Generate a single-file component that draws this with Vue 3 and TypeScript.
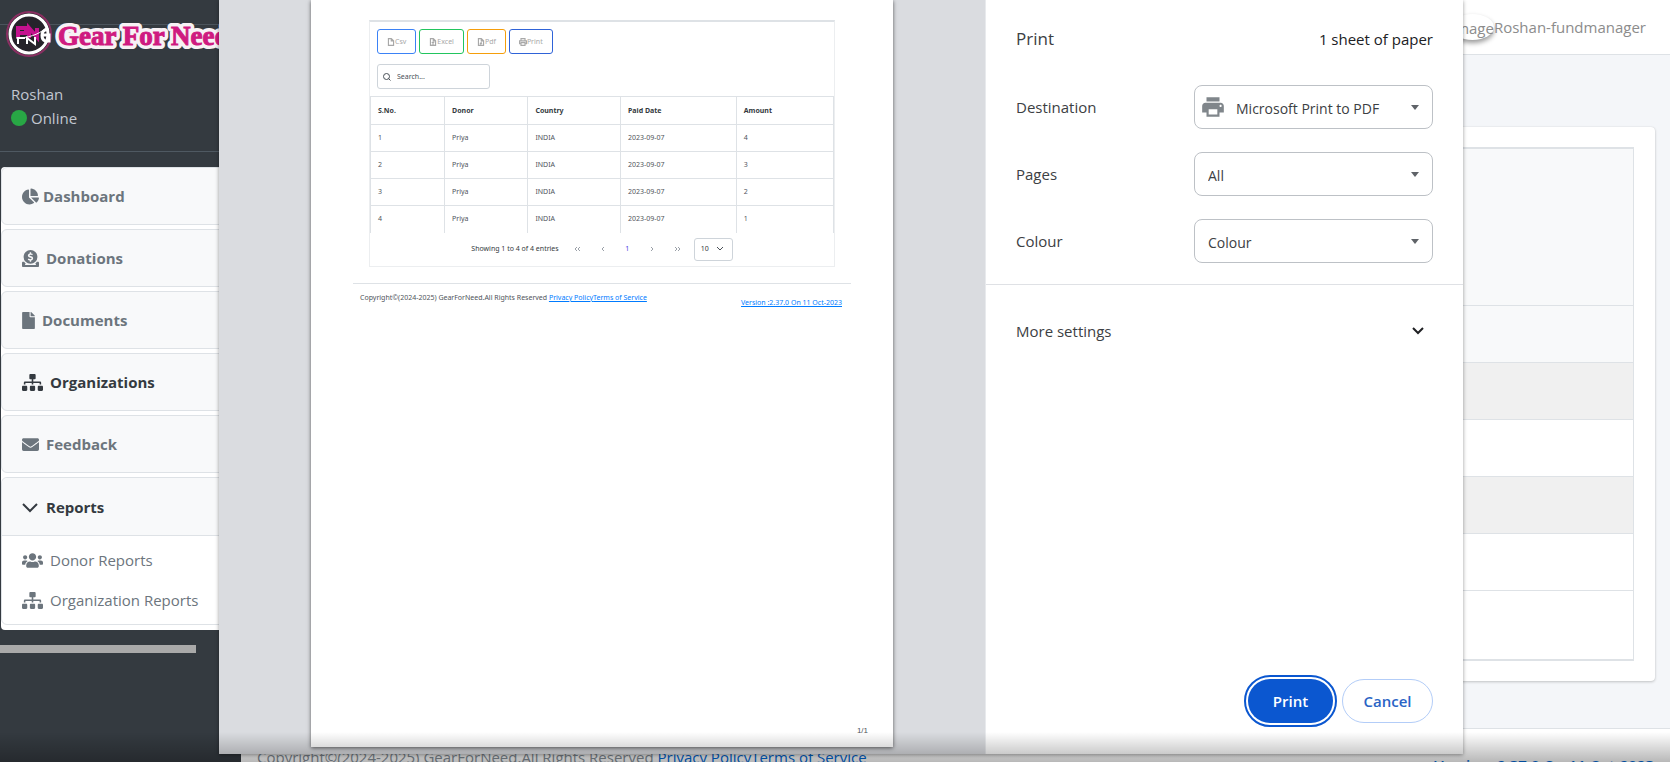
<script setup lang="ts">
import { ref } from 'vue'

interface NavItem {
  label: string
  icon: string
  viewBox: string
  width: number
  active?: boolean
}

interface Donation {
  id: number
  donor: string
  country: string
  paid: string
  amount: number
}

const sitemap =
  'M128 352H32c-17.67 0-32 14.33-32 32v96c0 17.67 14.33 32 32 32h96c17.67 0 32-14.33 32-32v-96c0-17.67-14.33-32-32-32zm-24-80h192v48h48v-48h192v48h48v-57.59c0-21.17-17.23-38.41-38.41-38.41H344v-64h40c17.67 0 32-14.33 32-32V32c0-17.67-14.33-32-32-32H256c-17.67 0-32 14.33-32 32v96c0 17.67 14.33 32 32 32h40v64H94.41C73.23 224 56 241.23 56 262.41V320h48v-48zm264 80h-96c-17.67 0-32 14.33-32 32v96c0 17.67 14.33 32 32 32h96c17.67 0 32-14.33 32-32v-96c0-17.67-14.33-32-32-32zm240 0h-96c-17.67 0-32 14.33-32 32v96c0 17.67 14.33 32 32 32h96c17.67 0 32-14.33 32-32v-96c0-17.67-14.33-32-32-32z'

const navItems: NavItem[] = [
  {
    label: 'Dashboard',
    width: 17,
    viewBox: '0 0 544 512',
    icon: 'M527.79 288H290.5l158.03 158.03c6.04 6.04 15.98 6.53 22.19.68 38.7-36.46 65.32-85.61 73.13-140.86 1.34-9.46-6.51-17.85-16.06-17.85zm-15.83-64.8C503.72 103.74 408.26 8.28 288.8.04 279.68-.59 272 7.1 272 16.24V240h223.77c9.14 0 16.82-7.68 16.19-16.8zM224 288V50.71c0-9.55-8.39-17.4-17.84-16.06C86.99 51.49-4.1 155.6.14 280.37 4.5 408.51 114.83 513.59 243.03 511.98c50.4-.63 96.97-16.87 135.26-44.03 7.9-5.6 8.42-17.23 1.57-24.08L224 288z',
  },
  {
    label: 'Donations',
    width: 17,
    viewBox: '0 0 512 512',
    icon: 'M256 416a208 208 0 1 0 0-416a208 208 0 0 0 0 416zM233 70h42v32c22 2 38 8 54 20l-26 34c-22-15-76-22-80 4c-2 34 112 16 112 90c0 38-26 62-60 68v34h-42v-33c-24-3-44-11-60-24l26-36c26 20 84 30 90 0c4-40-112-18-112-92c0-36 26-58 56-64zM480 352h-34a256 256 0 0 1-58 64h24c8 0 12 8 12 16s-6 16-14 16H102c-8 0-14-8-14-16s6-16 14-16h22a256 256 0 0 1-58-64H32c-18 0-32 14-32 32v96c0 18 14 32 32 32h448c18 0 32-14 32-32v-96c0-18-14-32-32-32z',
  },
  {
    label: 'Documents',
    width: 13,
    viewBox: '0 0 384 512',
    icon: 'M224 136V0H24C10.7 0 0 10.7 0 24v464c0 13.3 10.7 24 24 24h336c13.3 0 24-10.7 24-24V160H248c-13.2 0-24-10.8-24-24zm160-14.1v6.1H256V0h6.1c6.4 0 12.5 2.5 17 7l97.9 98c4.5 4.5 7 10.6 7 16.9z',
  },
  { label: 'Organizations', width: 21, viewBox: '0 0 640 512', active: true, icon: sitemap },
  {
    label: 'Feedback',
    width: 17,
    viewBox: '0 0 512 512',
    icon: 'M502.3 190.8c3.9-3.1 9.7-.2 9.7 4.7V400c0 26.5-21.5 48-48 48H48c-26.5 0-48-21.5-48-48V195.6c0-5 5.7-7.8 9.7-4.7 22.4 17.4 52.1 39.5 154.1 113.6 21.1 15.4 56.7 47.8 92.2 47.6 35.7.3 72-32.8 92.3-47.6 102-74.1 131.6-96.3 154-113.7zM256 320c23.2.4 56.6-29.2 73.4-41.4 132.7-96.3 142.8-104.7 173.4-128.7 5.8-4.5 9.2-11.5 9.2-18.9v-19c0-26.5-21.5-48-48-48H48c-26.5 0-48 21.5-48 48v19c0 7.4 3.4 14.3 9.2 18.9 30.6 23.9 40.7 32.4 173.4 128.7 16.8 12.2 50.2 41.8 73.4 41.4z',
  },
]

const reportLinks: NavItem[] = [
  {
    label: 'Donor Reports',
    width: 21,
    viewBox: '0 0 640 512',
    icon: 'M96 224c35.3 0 64-28.7 64-64s-28.7-64-64-64-64 28.7-64 64 28.7 64 64 64zm448 0c35.3 0 64-28.7 64-64s-28.7-64-64-64-64 28.7-64 64 28.7 64 64 64zm32 32h-64c-17.6 0-33.5 7.1-45.1 18.6 40.3 22.1 68.9 62 75.1 109.4h66c17.7 0 32-14.3 32-32v-32c0-35.3-28.7-64-64-64zm-256 0c61.9 0 112-50.1 112-112S381.9 32 320 32 208 82.1 208 144s50.1 112 112 112zm76.8 32h-8.3c-20.8 10-43.9 16-68.5 16s-47.6-6-68.5-16h-8.3C179.6 288 128 339.6 128 403.2V432c0 26.5 21.5 48 48 48h288c26.5 0 48-21.5 48-48v-28.8c0-63.6-51.6-115.2-115.2-115.2zm-223.7-13.4C161.5 263.1 145.6 256 128 256H64c-35.3 0-64 28.7-64 64v32c0 17.7 14.3 32 32 32h65.9c6.3-47.4 34.9-87.3 75.2-109.4z',
  },
  { label: 'Organization Reports', width: 21, viewBox: '0 0 640 512', icon: sitemap },
]

const filePath = 'M2.5 1h5l4 4v8h-9zM7.5 1v4h4'
const exportButtons = [
  { label: 'Csv', kind: 'csv', path: filePath },
  { label: 'Excel', kind: 'excel', path: filePath + 'M5 7l4 4M9 7l-4 4' },
  { label: 'Pdf', kind: 'pdf', path: filePath + 'M5 11c2-1 3-3 2-4M5 9l4 1' },
  { label: 'Print', kind: 'print', path: 'M3.5 5V1h7v4M3.5 10H1V5h12v5h-2.5M3.5 8h7v5h-7z' },
]

const columns = ['S.No.', 'Donor', 'Country', 'Paid Date', 'Amount']
const donations: Donation[] = [4, 3, 2, 1].map((amount, i) => ({
  id: i + 1,
  donor: 'Priya',
  country: 'INDIA',
  paid: '2023-09-07',
  amount,
}))

const destination = ref('Microsoft Print to PDF')
const pages = ref('All')
const colour = ref('Colour')
const search = ref('')
const pageSize = ref('10')
</script>

<template>
  <div class="screen">
    <aside class="sidebar">
      <a class="brand" href="#" aria-label="Gear For Need">
        <svg class="brand-art" width="241" height="68" viewBox="0 0 241 68">
          <circle cx="29" cy="34" r="22" fill="#222" stroke="#8a2f62" stroke-width="2" />
          <circle cx="29" cy="34" r="19" fill="#26232a" stroke="#fff" stroke-width="3" />
          <path d="M18 38V28h8v5h-8M29 38V28l8 9v-9" fill="none" stroke="#c4128e" stroke-width="4" />
          <path d="M18 44v-6h7M27 44v-6l8 6v-7" fill="none" stroke="#fff" stroke-width="2" />
          <path d="M49 30h-4c-4 2-4 9 0 11h4v-6h-6" fill="none" stroke="#fff" stroke-width="3" />
          <path d="M16 38c12 0 22-3 30-10" fill="none" stroke="#fff" stroke-width="1" />
          <text class="brand-glow" x="58" y="45">Gear For Need</text>
          <text class="brand-text" x="58" y="45">Gear For Need</text>
        </svg>
      </a>
      <div class="user">
        <div>Roshan</div>
        <div class="status"><span class="dot"></span>Online</div>
      </div>
      <nav class="menu">
        <a
          v-for="item in navItems"
          :key="item.label"
          href="#"
          class="menu-item"
          :class="{ active: item.active, tight: item.label === 'Dashboard' }"
        >
          <svg :width="item.width" height="17" :viewBox="item.viewBox" fill="currentColor" fill-rule="evenodd">
            <path :d="item.icon" />
          </svg>
          <span>{{ item.label }}</span>
        </a>
        <div class="menu-group">
          <button type="button" class="menu-item active group-head">
            <svg width="16" height="16" viewBox="0 0 16 16" fill="none" stroke="currentColor" stroke-width="2">
              <path d="M1 5l7 7 7-7" />
            </svg>
            <span>Reports</span>
          </button>
          <div class="group-body">
            <a v-for="link in reportLinks" :key="link.label" href="#" class="sub-item">
              <svg :width="link.width" height="17" :viewBox="link.viewBox" fill="currentColor">
                <path :d="link.icon" />
              </svg>
              <span>{{ link.label }}</span>
            </a>
          </div>
        </div>
      </nav>
      <div class="scroll-thumb"></div>
    </aside>

    <div class="main">
      <header class="topbar">
        <span class="avatar">Image</span>
        <span>Roshan-fundmanager</span>
      </header>
      <main class="content">
        <section class="card">
          <div class="grid">
            <div class="grid-tools"></div>
            <div class="grid-head"></div>
            <div v-for="row in donations" :key="row.id" class="grid-row"></div>
            <div class="grid-pager"></div>
          </div>
        </section>
      </main>
      <footer class="footer">
        <span>Copyright©(2024-2025) GearForNeed.All Rights Reserved <a href="#">Privacy Policy</a><a href="#">Terms of Service</a></span>
        <a class="version" href="#">Version :2.37.0 On 11 Oct-2023</a>
      </footer>
    </div>

    <div class="dialog" role="dialog" aria-label="Print">
      <div class="preview">
        <div class="paper">
          <div class="sheet-card">
            <div class="exports">
              <button v-for="b in exportButtons" :key="b.label" type="button" :class="b.kind">
                <svg width="8" height="8" viewBox="0 0 14 14" fill="none" stroke="currentColor" stroke-width="2">
                  <path :d="b.path" />
                </svg>
                {{ b.label }}
              </button>
            </div>
            <label class="search">
              <svg width="8" height="8" viewBox="0 0 16 16" fill="none" stroke="currentColor" stroke-width="2">
                <circle cx="7" cy="7" r="6" />
                <path d="M11 11l4 4" />
              </svg>
              <input v-model="search" type="text" placeholder="Search..." aria-label="Search" />
            </label>
            <table>
              <colgroup>
                <col class="c1" />
                <col class="c2" />
                <col class="c3" />
                <col class="c4" />
                <col />
              </colgroup>
              <thead>
                <tr>
                  <th v-for="c in columns" :key="c" scope="col">{{ c }}</th>
                </tr>
              </thead>
              <tbody>
                <tr v-for="row in donations" :key="row.id">
                  <td>{{ row.id }}</td>
                  <td>{{ row.donor }}</td>
                  <td>{{ row.country }}</td>
                  <td>{{ row.paid }}</td>
                  <td>{{ row.amount }}</td>
                </tr>
              </tbody>
            </table>
            <div class="pager">
              <span>Showing 1 to 4 of 4 entries</span>
              <button type="button" aria-label="First page">
                <svg width="7" height="6" viewBox="0 0 7 6"><path d="M3 1L1 3l2 2M6 1L4 3l2 2" /></svg>
              </button>
              <button type="button" aria-label="Previous page">
                <svg width="7" height="6" viewBox="0 0 7 6"><path d="M5 1L3 3l2 2" /></svg>
              </button>
              <button type="button" class="current">1</button>
              <button type="button" aria-label="Next page">
                <svg width="7" height="6" viewBox="0 0 7 6"><path d="M2 1l2 2-2 2" /></svg>
              </button>
              <button type="button" aria-label="Last page">
                <svg width="7" height="6" viewBox="0 0 7 6"><path d="M1 1l2 2-2 2M4 1l2 2-2 2" /></svg>
              </button>
              <span class="page-size">
                <select v-model="pageSize" aria-label="Rows per page">
                  <option>10</option>
                </select>
                <svg class="caret" width="8" height="6" viewBox="0 0 8 6"><path d="M1 1l3 3 3-3" /></svg>
              </span>
            </div>
          </div>
          <div class="sheet-footer">
            <span>Copyright©(2024-2025) GearForNeed.All Rights Reserved <a href="#">Privacy Policy</a><a href="#">Terms of Service</a></span>
            <a class="version" href="#">Version :2.37.0 On 11 Oct-2023</a>
          </div>
          <div class="page-no">1/1</div>
        </div>
      </div>

      <form class="settings" @submit.prevent>
        <div class="title-row">
          <h1>Print</h1>
          <span class="sheets">1 sheet of paper</span>
        </div>
        <div class="fields">
          <div class="field">
            <label for="destination">Destination</label>
            <span class="select with-icon">
              <svg class="printer" width="26" height="26" viewBox="0 0 24 24" fill="#80868b">
                <path d="M19 8H5c-1.66 0-3 1.34-3 3v6h4v4h12v-4h4v-6c0-1.66-1.34-3-3-3zm-3 11H8v-5h8v5zm3-7c-.55 0-1-.45-1-1s.45-1 1-1 1 .45 1 1-.45 1-1 1zm-1-9H6v4h12V3z" />
              </svg>
              <select id="destination" v-model="destination">
                <option>Microsoft Print to PDF</option>
              </select>
              <svg class="arrow" width="8" height="5" viewBox="0 0 8 5" fill="#5f6368"><path d="M0 0h8L4 5z" /></svg>
            </span>
          </div>
          <div class="field">
            <label for="pages">Pages</label>
            <span class="select">
              <select id="pages" v-model="pages">
                <option>All</option>
              </select>
              <svg class="arrow" width="8" height="5" viewBox="0 0 8 5" fill="#5f6368"><path d="M0 0h8L4 5z" /></svg>
            </span>
          </div>
          <div class="field">
            <label for="colour">Colour</label>
            <span class="select">
              <select id="colour" v-model="colour">
                <option>Colour</option>
              </select>
              <svg class="arrow" width="8" height="5" viewBox="0 0 8 5" fill="#5f6368"><path d="M0 0h8L4 5z" /></svg>
            </span>
          </div>
        </div>
        <button type="button" class="more">
          <span>More settings</span>
          <svg width="14" height="10" viewBox="0 0 14 10" fill="none" stroke="#202124" stroke-width="2">
            <path d="M2 2l5 5 5-5" />
          </svg>
        </button>
        <div class="actions">
          <button type="submit" class="primary">Print</button>
          <button type="button" class="secondary">Cancel</button>
        </div>
      </form>
    </div>

    <div class="shade"></div>
  </div>
</template>

<style>
body {
  margin: 0;
  overflow: hidden;
}
</style>

<style scoped>
* {
  box-sizing: border-box;
}
.screen {
  position: relative;
  display: flex;
  height: 100vh;
  overflow: hidden;
  font-family: 'Open Sans', 'Noto Sans', sans-serif;
  font-size: 15px;
  line-height: 24px;
  background: #f4f6f9;
}
button,
input,
select {
  font: inherit;
  color: inherit;
  background: none;
  border: 0;
  margin: 0;
  padding: 0;
}
svg {
  flex: none;
}

.sidebar {
  flex: none;
  width: 241px;
  background: #343a40;
  color: #c2c7d0;
  overflow: hidden;
}
.brand {
  display: block;
  height: 66px;
  background: linear-gradient(#4b545c, #4b545c) 0 24px / 100% 1px no-repeat;
}
.brand-art {
  display: block;
}
.brand-glow,
.brand-text {
  font-family: 'Liberation Serif', serif;
  font-weight: 700;
  font-size: 27px;
}
.brand-glow {
  fill: #fff;
  stroke: #f7f2f5;
  stroke-width: 8px;
  stroke-linejoin: round;
}
.brand-text {
  fill: #cf1a80;
  stroke: #cf1a80;
  stroke-width: 1px;
}
.user {
  padding: 16px 11px 21px;
  border-bottom: 1px solid #4f5962;
}
.status {
  display: flex;
  align-items: center;
  gap: 4px;
}
.dot {
  width: 16px;
  height: 16px;
  border-radius: 50%;
  background: #28a745;
}
.menu {
  display: flex;
  flex-direction: column;
  gap: 4px;
  margin: 15px 0 0 1px;
  padding-bottom: 5px;
  background: #fff;
  border-radius: 4px 0 0 4px;
}
.menu-item {
  display: flex;
  align-items: center;
  gap: 7px;
  height: 58px;
  padding: 0 20px;
  border: 1px solid #dee2e6;
  border-radius: 6px;
  background: #f8f9fa;
  color: #6c757d;
  font-weight: 700;
  text-decoration: none;
}
.menu-item.tight {
  gap: 4px;
}
.menu-item.active {
  color: #343a40;
}
.menu-group {
  border: 1px solid #dee2e6;
  border-radius: 6px;
}
.menu-item.group-head {
  width: 100%;
  gap: 8px;
  border-width: 0 0 1px;
  border-radius: 6px 6px 0 0;
}
.group-body {
  display: flex;
  flex-direction: column;
  gap: 16px;
  padding: 12px 20px;
}
.sub-item {
  display: flex;
  align-items: center;
  gap: 7px;
  color: #6c757d;
  text-decoration: none;
  white-space: nowrap;
}
.scroll-thumb {
  width: 196px;
  height: 8px;
  margin-top: 15px;
  background: #a9a9a9;
}

.main {
  flex: 1;
  min-width: 0;
  display: flex;
  flex-direction: column;
}
.topbar {
  display: flex;
  align-items: center;
  justify-content: flex-end;
  height: 55px;
  padding-right: 24px;
  background: #fff;
  border-bottom: 1px solid #dee2e6;
  color: #8c8c8c;
}
.avatar {
  padding-top: 2px;
  border-radius: 50%;
  box-shadow: 0 3px 5px #00000066;
}
.content {
  flex: 1;
  padding: 72px 15px 47px;
}
.card {
  height: 554px;
  padding: 20px 21px;
  border-radius: 4px;
  background: #fff;
  box-shadow: 0 0 1px #00000020, 0 1px 3px #00000033;
}
.grid {
  border-right: 1px solid #dee2e6;
  border-top: 2px solid #dee2e6;
}
.grid > div {
  height: 57px;
  border-bottom: 1px solid #dee2e6;
}
.grid > .grid-tools {
  height: 157px;
  background: #f8f9fa;
}
.grid > .grid-head {
  background: #f8f9fa;
}
.grid-row:nth-child(odd) {
  background: #f0f0f0;
}
.grid > .grid-pager {
  height: 70px;
  border-bottom-width: 2px;
}
.footer {
  flex: none;
  display: flex;
  justify-content: space-between;
  height: 52px;
  margin-bottom: -18px;
  padding: 16px;
  border-top: 1px solid #dee2e6;
  background: #fff;
  color: #869099;
}
.footer a {
  color: #0069d9;
}
.footer .version {
  padding-top: 8px;
  font-weight: 600;
}

.dialog {
  position: absolute;
  inset: 0 207px 8px 219px;
  display: flex;
  background: #fff;
  box-shadow: 0 1px 4px #00000066;
}
.preview {
  flex: 1;
  min-width: 0;
  display: flex;
  background: #dadce0;
}
.paper {
  flex: 1;
  min-width: 0;
  display: flex;
  flex-direction: column;
  margin: 0 92px 7px;
  padding: 20px 42px 7px;
  background: #fff;
  box-shadow: 0 1px 4px #00000099;
  color: #4f545b;
  font-family: 'Noto Sans', 'Open Sans', sans-serif;
  font-size: 7px;
  line-height: 10px;
}
.sheet-card {
  margin: 0 16px;
  border: 1px solid #eceef0;
  border-top: 2px solid #dee2e6;
}
.exports {
  display: flex;
  gap: 3px;
  padding: 7px 7px 0;
}
.exports button {
  display: flex;
  align-items: center;
  justify-content: center;
  height: 25px;
  padding: 0 9px;
  border: 1px solid;
  border-radius: 3px;
  color: #a8a8a8;
}
.exports .csv {
  border-color: #3b82f6;
}
.exports .excel {
  border-color: #22c55e;
}
.exports .pdf {
  border-color: #f59e0b;
}
.exports .print {
  border-color: #2f63d8;
}
.search {
  display: flex;
  align-items: center;
  gap: 6px;
  width: 113px;
  height: 25px;
  margin: 10px 7px 7px;
  padding: 0 5px;
  border: 1px solid #ced4da;
  border-radius: 3px;
  color: #495057;
}
.search input {
  width: 80px;
  outline: 0;
}
.search input::placeholder {
  color: #495057;
}
table {
  width: 100%;
  table-layout: fixed;
  border-collapse: collapse;
}
.c1 {
  width: 16%;
}
.c2 {
  width: 18%;
}
.c3 {
  width: 20%;
}
.c4 {
  width: 25%;
}
th,
td {
  height: 27px;
  padding: 0 7px;
  border: 1px solid #dee2e6;
  text-align: left;
}
th {
  height: 28px;
  color: #343a40;
  font-weight: 700;
}
tbody tr:last-child td {
  border-bottom: 0;
}
.pager {
  display: flex;
  align-items: center;
  justify-content: center;
  height: 33px;
  color: #343a40;
}
.pager button {
  display: flex;
  justify-content: center;
  width: 25px;
  color: #4f46e5;
}
.pager svg {
  fill: none;
  stroke: #9aa0a8;
}
.pager .caret {
  stroke: #495057;
}
.pager button:first-of-type {
  margin-left: 6px;
}
.page-size {
  display: flex;
  align-items: center;
  width: 39px;
  height: 23px;
  margin-left: 4px;
  padding: 0 8px 0 6px;
  border: 1px solid #ced4da;
  border-radius: 3px;
}
.page-size select {
  flex: 1;
  min-width: 0;
  appearance: none;
}
.sheet-footer {
  display: flex;
  justify-content: space-between;
  margin-top: 16px;
  padding: 9px 9px 0 7px;
  border-top: 1px solid #dee2e6;
}
.sheet-footer a {
  color: #007bff;
}
.sheet-footer .version {
  padding-top: 5px;
}
.page-no {
  margin: auto -17px 0 0;
  padding-bottom: 4px;
  font-family: 'Liberation Sans', sans-serif;
  font-size: 8px;
  text-align: right;
}

.settings {
  flex: none;
  width: 478px;
  display: flex;
  flex-direction: column;
  color: #3c4043;
  border-left: 1px solid #e8eaed;
}
.title-row {
  display: flex;
  align-items: center;
  justify-content: space-between;
  height: 77px;
  padding: 0 30px;
}
h1 {
  margin: 0;
  font-size: 17px;
  font-weight: 400;
}
.sheets {
  font-weight: 500;
  color: #202124;
}
.fields {
  display: flex;
  flex-direction: column;
  gap: 23px;
  padding: 8px 30px 21px;
  border-bottom: 1px solid #dfe1e5;
}
.field {
  display: flex;
  align-items: center;
  justify-content: space-between;
}
.select {
  position: relative;
  width: 239px;
  height: 44px;
  font-size: 14px;
}
.select select {
  width: 100%;
  height: 100%;
  padding: 3px 30px 0 13px;
  border: 1px solid #bdc1c6;
  border-radius: 8px;
  appearance: none;
}
.select.with-icon select {
  padding-left: 41px;
}
.printer {
  position: absolute;
  left: 6px;
  top: 9px;
}
.arrow {
  position: absolute;
  right: 14px;
  top: 20px;
}
.more {
  display: flex;
  align-items: center;
  justify-content: space-between;
  height: 92px;
  padding: 0 38px 0 30px;
}
.actions {
  display: flex;
  justify-content: flex-end;
  gap: 9px;
  margin-top: auto;
  padding: 0 30px 31px;
}
.actions button {
  height: 44px;
  border-radius: 22px;
  font-weight: 600;
}
.primary {
  width: 85px;
  background: #0b57d0;
  color: #fff;
  outline: 2px solid #0b57d0;
  outline-offset: 2px;
}
.actions .secondary {
  width: 91px;
  border: 1px solid #b3cdf8;
  color: #2a64c5;
}
.shade {
  position: absolute;
  inset: auto 0 0;
  height: 30px;
  background: linear-gradient(transparent, #00000047);
  pointer-events: none;
}
</style>
